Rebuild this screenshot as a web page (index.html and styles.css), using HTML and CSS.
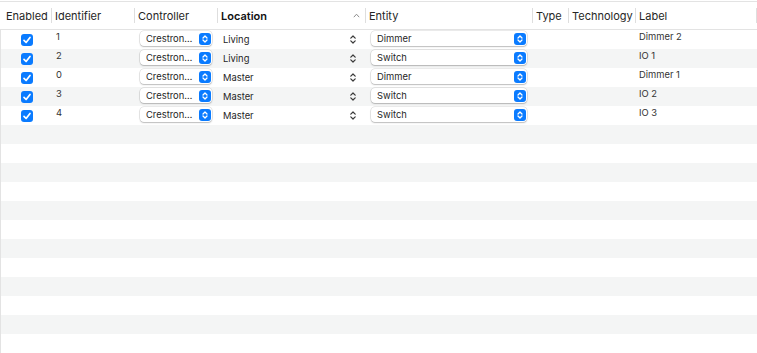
FILE: index.html
```html
<!DOCTYPE html>
<html lang="en">
<head>
  <meta charset="UTF-8">
  <title>Devices</title>
  <link rel="stylesheet" href="styles.css">
</head>
<body>
  <div class="table">
    <!-- column headers -->
    <div class="head">
      <div class="hcell first">Enabled</div>
      <div class="hcell">Identifier</div>
      <div class="hcell">Controller</div>
      <div class="hcell sorted">Location
        <svg class="sort" width="7" height="5" viewBox="0 0 7 5"><path d="M0.8 4.2 L3.5 1.2 L6.2 4.2" fill="none" stroke="#8c8c8c" stroke-width="1"/></svg>
      </div>
      <div class="hcell">Entity</div>
      <div class="hcell">Type</div>
      <div class="hcell">Technology</div>
      <div class="hcell">Label</div>
    </div>

    <div class="body">
      <div class="row">
        <div class="cell check"><span class="box"><svg width="12" height="12" viewBox="0 0 12 12"><path d="M3 6.3 L5.1 8.5 L9 3.4" fill="none" stroke="#fff" stroke-width="1.7" stroke-linecap="round" stroke-linejoin="round"/></svg></span></div>
        <div class="cell num">1</div>
        <div class="cell"><div class="popup ctrl"><span>Crestron…</span><span class="stepper"><svg width="12" height="12" viewBox="0 0 12 12"><path d="M4 5 L6 3 L8 5 M4 7 L6 9 L8 7" fill="none" stroke="#fff" stroke-width="1.3" stroke-linecap="round" stroke-linejoin="round"/></svg></span></div></div>
        <div class="cell loc"><span>Living</span><svg width="6" height="9" viewBox="0 0 6 9"><path d="M0.8 3.2 L3 1 L5.2 3.2 M0.8 5.8 L3 8 L5.2 5.8" fill="none" stroke="#3a3a3a" stroke-width="1.2" stroke-linecap="round" stroke-linejoin="round"/></svg></div>
        <div class="cell"><div class="popup ent"><span>Dimmer</span><span class="stepper"><svg width="12" height="12" viewBox="0 0 12 12"><path d="M4 5 L6 3 L8 5 M4 7 L6 9 L8 7" fill="none" stroke="#fff" stroke-width="1.3" stroke-linecap="round" stroke-linejoin="round"/></svg></span></div></div>
        <div class="cell"></div>
        <div class="cell"></div>
        <div class="cell label">Dimmer 2</div>
      </div>
      <div class="row">
        <div class="cell check"><span class="box"><svg width="12" height="12" viewBox="0 0 12 12"><path d="M3 6.3 L5.1 8.5 L9 3.4" fill="none" stroke="#fff" stroke-width="1.7" stroke-linecap="round" stroke-linejoin="round"/></svg></span></div>
        <div class="cell num">2</div>
        <div class="cell"><div class="popup ctrl"><span>Crestron…</span><span class="stepper"><svg width="12" height="12" viewBox="0 0 12 12"><path d="M4 5 L6 3 L8 5 M4 7 L6 9 L8 7" fill="none" stroke="#fff" stroke-width="1.3" stroke-linecap="round" stroke-linejoin="round"/></svg></span></div></div>
        <div class="cell loc"><span>Living</span><svg width="6" height="9" viewBox="0 0 6 9"><path d="M0.8 3.2 L3 1 L5.2 3.2 M0.8 5.8 L3 8 L5.2 5.8" fill="none" stroke="#3a3a3a" stroke-width="1.2" stroke-linecap="round" stroke-linejoin="round"/></svg></div>
        <div class="cell"><div class="popup ent"><span>Switch</span><span class="stepper"><svg width="12" height="12" viewBox="0 0 12 12"><path d="M4 5 L6 3 L8 5 M4 7 L6 9 L8 7" fill="none" stroke="#fff" stroke-width="1.3" stroke-linecap="round" stroke-linejoin="round"/></svg></span></div></div>
        <div class="cell"></div>
        <div class="cell"></div>
        <div class="cell label">IO 1</div>
      </div>
      <div class="row">
        <div class="cell check"><span class="box"><svg width="12" height="12" viewBox="0 0 12 12"><path d="M3 6.3 L5.1 8.5 L9 3.4" fill="none" stroke="#fff" stroke-width="1.7" stroke-linecap="round" stroke-linejoin="round"/></svg></span></div>
        <div class="cell num">0</div>
        <div class="cell"><div class="popup ctrl"><span>Crestron…</span><span class="stepper"><svg width="12" height="12" viewBox="0 0 12 12"><path d="M4 5 L6 3 L8 5 M4 7 L6 9 L8 7" fill="none" stroke="#fff" stroke-width="1.3" stroke-linecap="round" stroke-linejoin="round"/></svg></span></div></div>
        <div class="cell loc"><span>Master</span><svg width="6" height="9" viewBox="0 0 6 9"><path d="M0.8 3.2 L3 1 L5.2 3.2 M0.8 5.8 L3 8 L5.2 5.8" fill="none" stroke="#3a3a3a" stroke-width="1.2" stroke-linecap="round" stroke-linejoin="round"/></svg></div>
        <div class="cell"><div class="popup ent"><span>Dimmer</span><span class="stepper"><svg width="12" height="12" viewBox="0 0 12 12"><path d="M4 5 L6 3 L8 5 M4 7 L6 9 L8 7" fill="none" stroke="#fff" stroke-width="1.3" stroke-linecap="round" stroke-linejoin="round"/></svg></span></div></div>
        <div class="cell"></div>
        <div class="cell"></div>
        <div class="cell label">Dimmer 1</div>
      </div>
      <div class="row">
        <div class="cell check"><span class="box"><svg width="12" height="12" viewBox="0 0 12 12"><path d="M3 6.3 L5.1 8.5 L9 3.4" fill="none" stroke="#fff" stroke-width="1.7" stroke-linecap="round" stroke-linejoin="round"/></svg></span></div>
        <div class="cell num">3</div>
        <div class="cell"><div class="popup ctrl"><span>Crestron…</span><span class="stepper"><svg width="12" height="12" viewBox="0 0 12 12"><path d="M4 5 L6 3 L8 5 M4 7 L6 9 L8 7" fill="none" stroke="#fff" stroke-width="1.3" stroke-linecap="round" stroke-linejoin="round"/></svg></span></div></div>
        <div class="cell loc"><span>Master</span><svg width="6" height="9" viewBox="0 0 6 9"><path d="M0.8 3.2 L3 1 L5.2 3.2 M0.8 5.8 L3 8 L5.2 5.8" fill="none" stroke="#3a3a3a" stroke-width="1.2" stroke-linecap="round" stroke-linejoin="round"/></svg></div>
        <div class="cell"><div class="popup ent"><span>Switch</span><span class="stepper"><svg width="12" height="12" viewBox="0 0 12 12"><path d="M4 5 L6 3 L8 5 M4 7 L6 9 L8 7" fill="none" stroke="#fff" stroke-width="1.3" stroke-linecap="round" stroke-linejoin="round"/></svg></span></div></div>
        <div class="cell"></div>
        <div class="cell"></div>
        <div class="cell label">IO 2</div>
      </div>
      <div class="row">
        <div class="cell check"><span class="box"><svg width="12" height="12" viewBox="0 0 12 12"><path d="M3 6.3 L5.1 8.5 L9 3.4" fill="none" stroke="#fff" stroke-width="1.7" stroke-linecap="round" stroke-linejoin="round"/></svg></span></div>
        <div class="cell num">4</div>
        <div class="cell"><div class="popup ctrl"><span>Crestron…</span><span class="stepper"><svg width="12" height="12" viewBox="0 0 12 12"><path d="M4 5 L6 3 L8 5 M4 7 L6 9 L8 7" fill="none" stroke="#fff" stroke-width="1.3" stroke-linecap="round" stroke-linejoin="round"/></svg></span></div></div>
        <div class="cell loc"><span>Master</span><svg width="6" height="9" viewBox="0 0 6 9"><path d="M0.8 3.2 L3 1 L5.2 3.2 M0.8 5.8 L3 8 L5.2 5.8" fill="none" stroke="#3a3a3a" stroke-width="1.2" stroke-linecap="round" stroke-linejoin="round"/></svg></div>
        <div class="cell"><div class="popup ent"><span>Switch</span><span class="stepper"><svg width="12" height="12" viewBox="0 0 12 12"><path d="M4 5 L6 3 L8 5 M4 7 L6 9 L8 7" fill="none" stroke="#fff" stroke-width="1.3" stroke-linecap="round" stroke-linejoin="round"/></svg></span></div></div>
        <div class="cell"></div>
        <div class="cell"></div>
        <div class="cell label">IO 3</div>
      </div>
      <!-- empty striped rows -->
      <div class="row"></div>
      <div class="row"></div>
      <div class="row"></div>
      <div class="row"></div>
      <div class="row"></div>
      <div class="row"></div>
      <div class="row"></div>
      <div class="row"></div>
      <div class="row"></div>
      <div class="row"></div>
      <div class="row"></div>
      <div class="row"></div>
    </div>
  </div>
</body>
</html>
```

FILE: styles.css
```css
* { box-sizing: border-box; }
body {
  margin: 0;
  background: #fff;
  font-family: Inter, "Liberation Sans", sans-serif;
  color: #262626;
  overflow: hidden;
}
.table {
  margin-top: 1px;
  border-top: 1px solid #e3e3e3;
}

/* header */
.head {
  display: grid;
  grid-template-columns: 52px 83px 83px 148px 167px 36px 67px 121px;
  align-items: center;
  height: 28px;
  border-bottom: 1px solid #e3e3e3;
}
.hcell {
  display: flex;
  align-items: center;
  height: 15px;
  padding-left: 3px;
  font-size: 11px;
  color: #262626;
  border-right: 1px solid #dedede;
  white-space: nowrap;
  overflow: hidden;
}
.hcell.first { padding-left: 6px; }
.hcell.sorted {
  font-weight: 600;
  color: #111;
  justify-content: space-between;
  padding-right: 5px;
}

/* rows */
.row {
  display: grid;
  grid-template-columns: 52px 83px 83px 148px 167px 36px 67px 121px;
  height: 19px;
  box-shadow: inset 1px 0 0 #e3e3e3;
}
.body .row:nth-child(even) { background: #f4f5f5; }
.cell {
  display: flex;
  align-items: center;
  font-size: 9.4px;
  white-space: nowrap;
  overflow: hidden;
}
.check { padding-left: 21px; }
.box {
  display: block;
  width: 12px;
  height: 12px;
  border-radius: 3px;
  background: #0a7bff;
}
.box svg { display: block; }
.num, .label {
  align-items: flex-start;
  padding-top: 1px;
  padding-left: 4px;
  color: #333;
}
.label { padding-left: 3px; }

/* pop-up buttons */
.popup {
  display: flex;
  align-items: center;
  justify-content: space-between;
  height: 15px;
  margin-top: 1px;
  margin-left: 5px;
  padding-left: 6px;
  padding-right: 1px;
  background: #fff;
  border-radius: 4px;
  box-shadow: 0 0 0 0.5px rgba(0,0,0,0.16), 0 1px 1.5px rgba(0,0,0,0.2);
}
.popup.ctrl { width: 72px; }
.popup.ent { width: 156px; }
.cell:has(.popup) { align-items: flex-start; padding-top: 0; }
.stepper {
  display: block;
  width: 12px;
  height: 12px;
  border-radius: 3px;
  background: #0a7bff;
}
.stepper svg { display: block; }
.loc {
  justify-content: space-between;
  padding-left: 5px;
  padding-right: 10px;
}
.loc svg { display: block; }
```
